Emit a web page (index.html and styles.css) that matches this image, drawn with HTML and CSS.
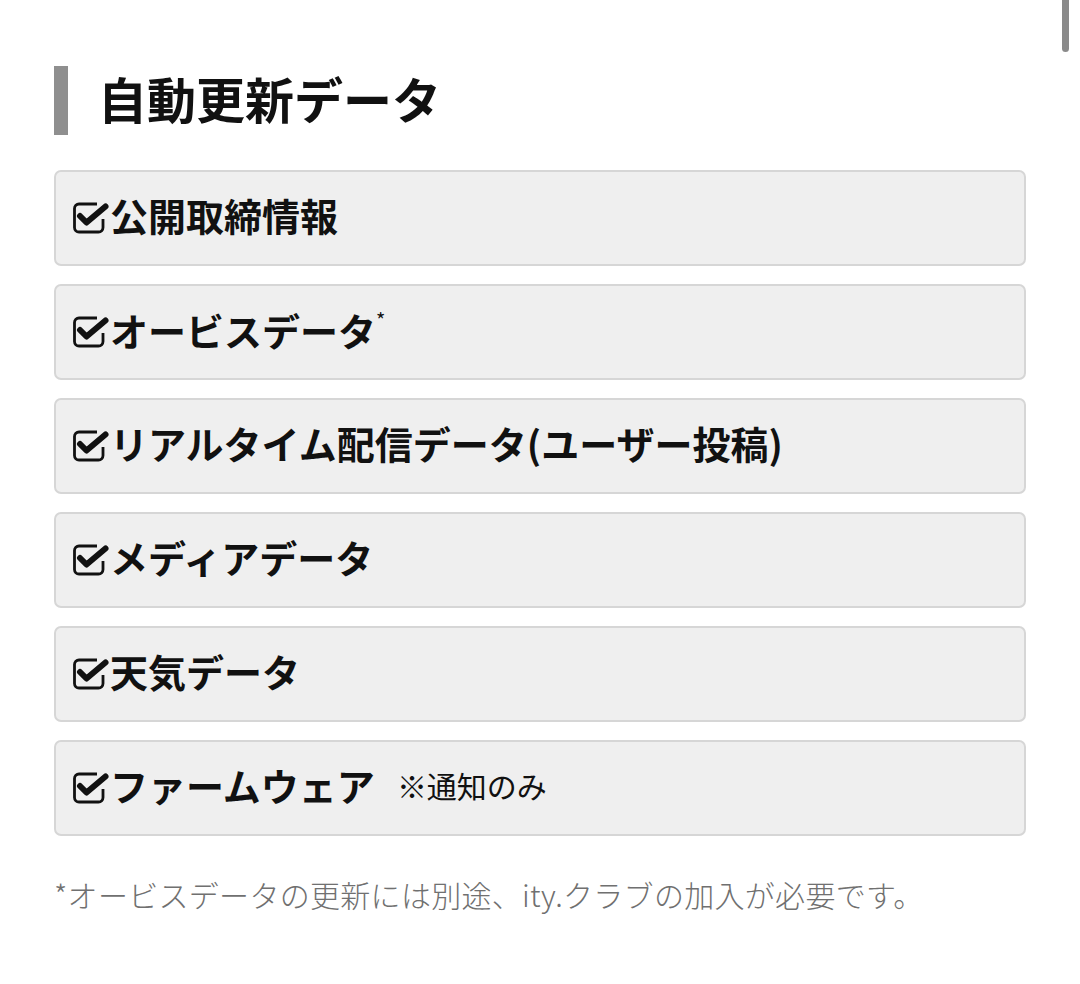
FILE: index.html
```html
<!DOCTYPE html>
<html lang="ja">
<head>
  <meta charset="UTF-8">
  <title>自動更新データ</title>
  <meta name="viewport" content="width=device-width, initial-scale=1.0">
  <link rel="stylesheet" href="styles.css">
</head>
<body>
  <div class="page">
    <h1 class="section-title">自動更新データ</h1>

    <ul class="data-list">
      <li class="data-item">
        <svg class="check" viewBox="0 0 36 32"><path d="M24 2H6a4.5 4.5 0 0 0-4.5 4.5v19A4.5 4.5 0 0 0 6 30h19.5a4.5 4.5 0 0 0 4.5-4.5V17" fill="none" stroke="#111" stroke-width="2.8"/><path d="M7 14l6.5 6.5L32.5 4.5" fill="none" stroke="#111" stroke-width="6" stroke-linecap="round" stroke-linejoin="round"/></svg>
        <span>公開取締情報</span>
      </li>
      <li class="data-item">
        <svg class="check" viewBox="0 0 36 32"><path d="M24 2H6a4.5 4.5 0 0 0-4.5 4.5v19A4.5 4.5 0 0 0 6 30h19.5a4.5 4.5 0 0 0 4.5-4.5V17" fill="none" stroke="#111" stroke-width="2.8"/><path d="M7 14l6.5 6.5L32.5 4.5" fill="none" stroke="#111" stroke-width="6" stroke-linecap="round" stroke-linejoin="round"/></svg>
        <span>オービスデータ<sup>*</sup></span>
      </li>
      <li class="data-item">
        <svg class="check" viewBox="0 0 36 32"><path d="M24 2H6a4.5 4.5 0 0 0-4.5 4.5v19A4.5 4.5 0 0 0 6 30h19.5a4.5 4.5 0 0 0 4.5-4.5V17" fill="none" stroke="#111" stroke-width="2.8"/><path d="M7 14l6.5 6.5L32.5 4.5" fill="none" stroke="#111" stroke-width="6" stroke-linecap="round" stroke-linejoin="round"/></svg>
        <span>リアルタイム配信データ(ユーザー投稿)</span>
      </li>
      <li class="data-item">
        <svg class="check" viewBox="0 0 36 32"><path d="M24 2H6a4.5 4.5 0 0 0-4.5 4.5v19A4.5 4.5 0 0 0 6 30h19.5a4.5 4.5 0 0 0 4.5-4.5V17" fill="none" stroke="#111" stroke-width="2.8"/><path d="M7 14l6.5 6.5L32.5 4.5" fill="none" stroke="#111" stroke-width="6" stroke-linecap="round" stroke-linejoin="round"/></svg>
        <span>メディアデータ</span>
      </li>
      <li class="data-item">
        <svg class="check" viewBox="0 0 36 32"><path d="M24 2H6a4.5 4.5 0 0 0-4.5 4.5v19A4.5 4.5 0 0 0 6 30h19.5a4.5 4.5 0 0 0 4.5-4.5V17" fill="none" stroke="#111" stroke-width="2.8"/><path d="M7 14l6.5 6.5L32.5 4.5" fill="none" stroke="#111" stroke-width="6" stroke-linecap="round" stroke-linejoin="round"/></svg>
        <span>天気データ</span>
      </li>
      <li class="data-item">
        <svg class="check" viewBox="0 0 36 32"><path d="M24 2H6a4.5 4.5 0 0 0-4.5 4.5v19A4.5 4.5 0 0 0 6 30h19.5a4.5 4.5 0 0 0 4.5-4.5V17" fill="none" stroke="#111" stroke-width="2.8"/><path d="M7 14l6.5 6.5L32.5 4.5" fill="none" stroke="#111" stroke-width="6" stroke-linecap="round" stroke-linejoin="round"/></svg>
        <span>ファームウェア</span>
        <small class="note">※通知のみ</small>
      </li>
    </ul>

    <p class="footnote">*オービスデータの更新には別途、ity.クラブの加入が必要です。</p>
  </div>

  <!-- スクロールバー -->
  <div class="scroll-thumb"></div>
</body>
</html>
```

FILE: styles.css
```css
* { box-sizing: border-box; margin: 0; padding: 0; }
body {
  font-family: 'Noto Sans CJK JP', 'Noto Sans', sans-serif;
  background: #ffffff;
  color: #111;
}
.page {
  padding: 66px 54px 40px;
}
.section-title {
  display: flex;
  align-items: center;
  height: 69px;
  border-left: 14px solid #8f8f8f;
  padding-left: 30px;
  padding-bottom: 6px;
  font-size: 49px;
  font-weight: 700;
  line-height: 1;
  margin-bottom: 35px;
}
.data-list {
  list-style: none;
  display: flex;
  flex-direction: column;
  gap: 18px;
}
.data-item {
  display: flex;
  align-items: center;
  height: 96px;
  padding: 0 17px 6px;
  background-color: #efefef;
  border: 2px solid #d6d6d6;
  border-radius: 7px;
  font-size: 38px;
  font-weight: 700;
  line-height: 1;
}
.check {
  width: 36px;
  height: 32px;
  margin: 6px 1px 0 0;
  flex-shrink: 0;
}
.data-item sup {
  font-size: 20px;
  font-weight: 400;
  vertical-align: 18px;
}
.note {
  margin-left: 22px;
  font-size: 30px;
  font-weight: 400;
}
.footnote {
  margin-top: 36px;
  font-size: 30px;
  font-weight: 300;
  letter-spacing: 0.3px;
  color: #707070;
}
.scroll-thumb {
  position: fixed;
  top: 0;
  right: 11px;
  width: 7px;
  height: 52px;
  border-radius: 0 0 4px 4px;
  background-color: #8a8a8a;
}
```
